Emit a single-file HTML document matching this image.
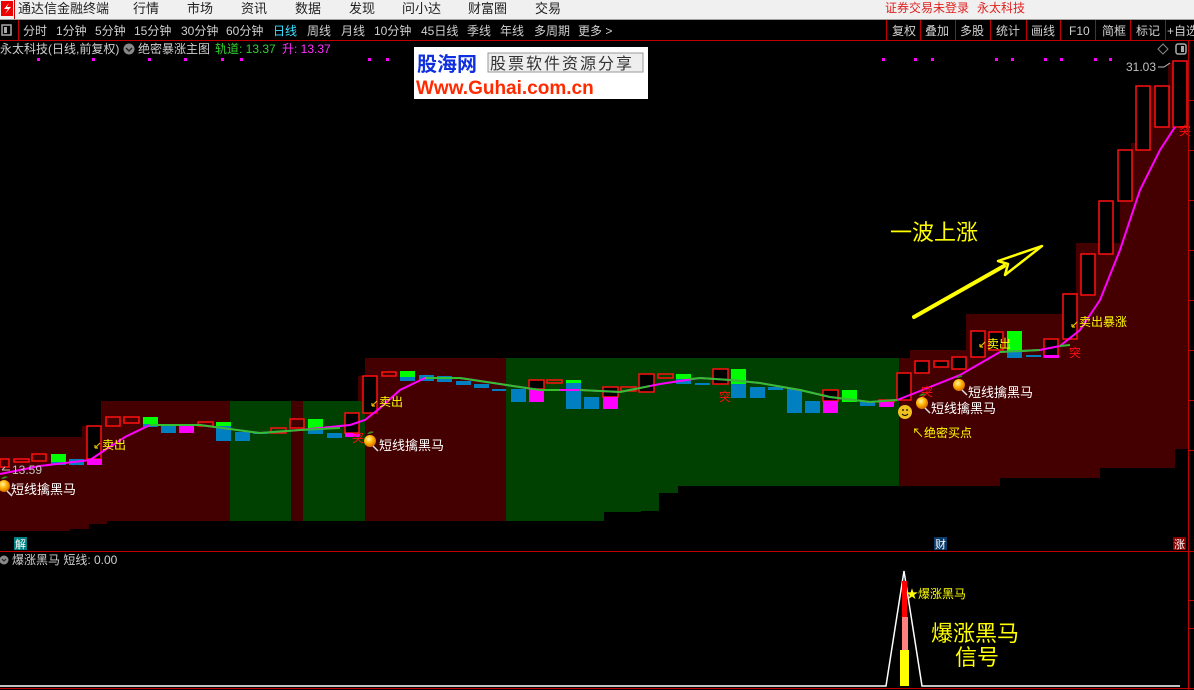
<!DOCTYPE html>
<html><head><meta charset="utf-8">
<style>
html,body{margin:0;padding:0;background:#000;width:1194px;height:690px;overflow:hidden}
svg{display:block}
text{font-family:"Liberation Sans","Noto Sans CJK SC",sans-serif}
</style></head><body>
<svg width="1194" height="690" viewBox="0 0 1194 690" xmlns="http://www.w3.org/2000/svg">
<defs>
<radialGradient id="org" cx="0.4" cy="0.35" r="0.7"><stop offset="0" stop-color="#fff6a0"/><stop offset="0.5" stop-color="#ffb000"/><stop offset="1" stop-color="#d06000"/></radialGradient>
<g id="fruit"><path d="M-3,-7 q3,-4 7,-2 q-3,2 -7,2z" fill="#3a8a20"/><circle r="6" fill="url(#org)"/><line x1="3" y1="5" x2="8" y2="10" stroke="#ddd" stroke-width="1.5"/></g>
</defs>
<!-- top menu -->
<rect x="0" y="0" width="1194" height="19" fill="#f0f0f0"/>
<rect x="0" y="19" width="1194" height="1" fill="#a0a0a0"/>
<rect x="1" y="1" width="12" height="15" fill="#e00"/>
<path d="M9,3 L4,9 L8,9 L5,14 L11,7 L7,7z" fill="#fff"/>
<rect x="14" y="0" width="1" height="19" fill="#c00"/>
<g font-size="13" fill="#222">
<text x="18" y="13">通达信金融终端</text>
<text x="133" y="13">行情</text><text x="187" y="13">市场</text><text x="241" y="13">资讯</text><text x="295" y="13">数据</text><text x="349" y="13">发现</text><text x="402" y="13">问小达</text><text x="468" y="13">财富圈</text><text x="535" y="13">交易</text>
</g>
<text x="885" y="12" font-size="12" fill="#e02020">证券交易未登录</text>
<text x="977" y="12" font-size="12" fill="#e02020">永太科技</text>
<!-- toolbar -->
<rect x="0" y="20" width="1194" height="20" fill="#000"/>
<rect x="0" y="40" width="1194" height="1" fill="#c00000"/>
<rect x="2" y="25" width="9" height="10" fill="none" stroke="#aaa" stroke-width="1.5"/><rect x="4" y="27" width="3" height="6" fill="#aaa"/>
<rect x="18" y="20" width="1" height="20" fill="#c00000"/>
<g font-size="12" fill="#d0d0d0">
<text x="23" y="35">分时</text><text x="56" y="35">1分钟</text><text x="95" y="35">5分钟</text><text x="134" y="35">15分钟</text><text x="181" y="35">30分钟</text><text x="226" y="35">60分钟</text>
<text x="273" y="35" fill="#40e0ff">日线</text><text x="307" y="35">周线</text><text x="341" y="35">月线</text><text x="374" y="35">10分钟</text><text x="421" y="35">45日线</text><text x="467" y="35">季线</text><text x="500" y="35">年线</text><text x="534" y="35">多周期</text><text x="578" y="35">更多 &gt;</text>
<text x="892" y="35">复权</text><text x="925" y="35">叠加</text><text x="960" y="35">多股</text><text x="996" y="35">统计</text><text x="1031" y="35">画线</text><text x="1069" y="35">F10</text><text x="1102" y="35">简框</text><text x="1136" y="35">标记</text><text x="1167" y="35">+自选</text>
</g>
<g fill="#c00000"><rect x="886" y="20" width="1" height="20"/><rect x="920" y="20" width="1" height="20"/><rect x="955" y="20" width="1" height="20"/><rect x="990" y="20" width="1" height="20"/><rect x="1026" y="20" width="1" height="20"/><rect x="1060" y="20" width="1" height="20"/><rect x="1095" y="20" width="1" height="20"/><rect x="1130" y="20" width="1" height="20"/><rect x="1165" y="20" width="1" height="20"/></g>

<!-- background zones -->
<g fill="#440000">
<path d="M0,437 L82,437 L82,426 L101,426 L101,401 L365,401 L365,521 L107,521 L107,524 L89,524 L89,529 L70,529 L70,531 L0,531z"/>
<path d="M358,376 L365,376 L365,358 L506,358 L506,521 L358,521z"/>
<path d="M899,358 L910,358 L910,350 L966,350 L966,314 L1063,314 L1063,293 L1076,293 L1076,243 L1120,243 L1120,201 L1131,201 L1131,143 L1139,143 L1139,86 L1168,86 L1168,63 L1188,63 L1188,449 L1175,449 L1175,468 L1100,468 L1100,478 L1000,478 L1000,486 L899,486z"/>
</g>
<g fill="#004000">
<rect x="230" y="401" width="61" height="120"/>
<rect x="303" y="401" width="62" height="120"/>
<path d="M506,358 L899,358 L899,486 L678,486 L678,493 L659,493 L659,511 L641,511 L641,512 L604,512 L604,521 L506,521z"/>
</g>
<rect x="291" y="401" width="12" height="120" fill="#440000"/>

<!-- candles -->
<g fill="none" stroke="#ff1010" stroke-width="1.5">
<rect x="0" y="459" width="9" height="8"/><rect x="14" y="459" width="15" height="3"/><rect x="32" y="454" width="14" height="7"/>
<rect x="87" y="426" width="14" height="33" fill="#000"/><rect x="106" y="417" width="14" height="9"/><rect x="124" y="417" width="15" height="6"/>
<rect x="198" y="422" width="15" height="4"/><rect x="271" y="428" width="15" height="5"/><rect x="290" y="419" width="14" height="9"/>
<rect x="345" y="413" width="14" height="20" fill="#000"/><rect x="363" y="376" width="14" height="37" fill="#000"/><rect x="382" y="372" width="14" height="4"/>
<rect x="529" y="380" width="15" height="9" fill="#000"/><rect x="547" y="380" width="15" height="3"/><rect x="603" y="387" width="15" height="10" fill="#000"/><rect x="621" y="387" width="15" height="4"/>
<rect x="639" y="374" width="15" height="18" fill="#000"/><rect x="658" y="374" width="15" height="4"/><rect x="713" y="369" width="15" height="15" fill="#000"/>
<rect x="823" y="390" width="15" height="11" fill="#000"/><rect x="879" y="400" width="15" height="2"/><rect x="897" y="373" width="14" height="27" fill="#000"/>
<rect x="915" y="361" width="14" height="12" fill="#000"/><rect x="934" y="361" width="14" height="6" fill="#000"/><rect x="952" y="357" width="14" height="12" fill="#000"/>
<rect x="971" y="331" width="14" height="26" fill="#000"/><rect x="989" y="332" width="14" height="18" fill="#000"/><rect x="1044" y="339" width="14" height="18" fill="#000"/>
<rect x="1063" y="294" width="14" height="45" fill="#000"/><rect x="1081" y="254" width="14" height="41" fill="#000"/><rect x="1099" y="201" width="14" height="53" fill="#000"/>
<rect x="1118" y="150" width="14" height="51" fill="#000"/><rect x="1136" y="86" width="14" height="64" fill="#000"/><rect x="1155" y="86" width="14" height="41" fill="#000"/><rect x="1173" y="61" width="14" height="66" fill="#000"/>
</g>
<g fill="#00ff00">
<rect x="51" y="454" width="15" height="8"/><rect x="143" y="417" width="15" height="7"/><rect x="216" y="422" width="15" height="4"/><rect x="308" y="419" width="15" height="10"/>
<rect x="400" y="371" width="15" height="6"/><rect x="566" y="380" width="15" height="3"/><rect x="676" y="374" width="15" height="5"/><rect x="731" y="369" width="15" height="15"/>
<rect x="842" y="390" width="15" height="12"/><rect x="1007" y="331" width="15" height="20"/>
</g>
<g fill="#0080c0">
<rect x="51" y="462" width="15" height="3"/><rect x="69" y="459" width="15" height="6"/><rect x="143" y="424" width="15" height="3"/><rect x="161" y="426" width="15" height="7"/>
<rect x="216" y="426" width="15" height="15"/><rect x="235" y="432" width="15" height="9"/><rect x="253" y="432" width="15" height="2"/><rect x="308" y="429" width="15" height="5"/><rect x="327" y="433" width="15" height="5"/>
<rect x="400" y="377" width="15" height="4"/><rect x="419" y="375" width="15" height="6"/><rect x="437" y="376" width="15" height="6"/><rect x="456" y="381" width="15" height="4"/><rect x="474" y="384" width="15" height="4"/><rect x="492" y="389" width="14" height="2"/>
<rect x="511" y="389" width="15" height="13"/><rect x="566" y="383" width="15" height="26"/><rect x="584" y="397" width="15" height="12"/><rect x="676" y="379" width="15" height="5"/><rect x="695" y="383" width="15" height="2"/>
<rect x="731" y="384" width="15" height="14"/><rect x="750" y="387" width="15" height="11"/><rect x="768" y="387" width="15" height="3"/><rect x="787" y="389" width="15" height="24"/><rect x="805" y="401" width="15" height="12"/><rect x="860" y="401" width="15" height="5"/>
<rect x="1007" y="351" width="15" height="7"/><rect x="1026" y="355" width="15" height="2"/>
</g>
<g fill="#ff00ff">
<rect x="87" y="459" width="15" height="6"/><rect x="179" y="426" width="15" height="7"/><rect x="345" y="433" width="15" height="4"/><rect x="529" y="389" width="15" height="13"/>
<rect x="603" y="397" width="15" height="12"/><rect x="823" y="401" width="15" height="12"/><rect x="879" y="402" width="15" height="5"/><rect x="1044" y="355" width="15" height="3"/>
</g>
<!-- MA line -->
<polyline fill="none" stroke="#ff00ff" stroke-width="2" points="0,474 40,466 90,460 105,450 125,437 150,425 200,425 260,433 300,430 350,425 365,420 380,408 400,390 425,378 460,378 500,384 540,390 580,390 620,392 660,384 700,378 730,380 760,383 800,390 830,397 870,402 897,400 915,393 960,375 1000,352 1040,350 1060,346 1080,330 1100,300 1120,250 1140,190 1160,150 1175,127"/>
<polyline fill="none" stroke="#30c030" stroke-width="2" points="150,425 200,425 260,433 300,430 340,428"/>
<polyline fill="none" stroke="#30c030" stroke-width="2" points="425,378 460,378 500,384 540,390 560,390"/>
<polyline fill="none" stroke="#30c030" stroke-width="2" points="580,390 620,392 650,386"/>
<polyline fill="none" stroke="#30c030" stroke-width="2" points="690,379 700,378 730,380 760,383 800,390 830,397 870,402 897,400"/>
<polyline fill="none" stroke="#30c030" stroke-width="2" points="1000,352 1040,350"/>
<polyline fill="none" stroke="#30c030" stroke-width="2" points="1060,346 1070,345"/>
<!-- top dots -->
<g fill="#ff00ff">
<rect x="37" y="58" width="3" height="3"/><rect x="92" y="58" width="3" height="3"/><rect x="148" y="58" width="3" height="3"/><rect x="184" y="58" width="3" height="3"/><rect x="221" y="58" width="3" height="3"/><rect x="240" y="58" width="3" height="3"/><rect x="368" y="58" width="3" height="3"/><rect x="386" y="58" width="3" height="3"/>
<rect x="882" y="58" width="3" height="3"/><rect x="914" y="58" width="3" height="3"/><rect x="931" y="58" width="3" height="3"/><rect x="995" y="58" width="3" height="3"/><rect x="1011" y="58" width="3" height="3"/><rect x="1044" y="58" width="3" height="3"/><rect x="1060" y="58" width="3" height="3"/><rect x="1094" y="58" width="3" height="3"/><rect x="1109" y="58" width="3" height="3"/>
</g>
<!-- info line -->
<text x="0" y="53" font-size="12" fill="#d0d0d0">永太科技(日线,前复权)</text>
<circle cx="129" cy="49" r="5.5" fill="#888"/><path d="M126,48 l3,3 l3,-3" stroke="#222" stroke-width="1.5" fill="none"/>
<text x="138" y="53" font-size="12" fill="#d0d0d0">绝密暴涨主图</text>
<text x="215" y="53" font-size="12" fill="#30d030">轨道: 13.37</text>
<text x="282" y="53" font-size="12" fill="#ff30ff">升: 13.37</text>
<path d="M1163,44 l5,5 l-5,5 l-5,-5z" fill="none" stroke="#888"/>
<rect x="1176" y="44" width="10" height="10" rx="2" fill="none" stroke="#aaa" stroke-width="1.5"/><rect x="1181" y="46" width="3" height="6" fill="#aaa"/>
<!-- watermark -->
<rect x="414" y="47" width="234" height="52" fill="#fff"/>
<text x="417" y="71" font-size="20" font-weight="bold" fill="#1030e0">股海网</text>
<rect x="488" y="53" width="155" height="19" fill="#eee" stroke="#999"/>
<text x="490" y="69" font-size="16" fill="#333" font-family="Noto Serif CJK SC,serif" letter-spacing="2">股票软件资源分享</text>
<text x="416" y="94" font-size="19" font-weight="bold" fill="#ff2a00">Www.Guhai.com.cn</text>
<!-- price labels -->
<text x="1126" y="71" font-size="12" fill="#c0c0c0">31.03</text><path d="M1158,67 h6 l6,-4" stroke="#c0c0c0" fill="none"/>
<text x="12" y="474" font-size="12" fill="#c0c0c0">13.59</text><path d="M2,470 h8 M2,470 l3,-3" stroke="#c0c0c0" fill="none"/>
<!-- annotations -->
<g font-size="12" fill="#ffff00">
<text x="102" y="449">卖出</text><text x="379" y="406">卖出</text><text x="987" y="348">卖出</text><text x="1079" y="326">卖出暴涨</text>
<text x="912" y="437">↖绝密买点</text>
</g>
<g stroke="#e0c000" stroke-width="1.2"><path d="M95,448 l5,-5 M95,448 h3 M95,448 v-3"/><path d="M372,406 l5,-5 M372,406 h3 M372,406 v-3"/><path d="M980,347 l5,-5 M980,347 h3 M980,347 v-3"/><path d="M1072,327 l5,-5 M1072,327 h3 M1072,327 v-3"/></g>
<g font-size="12" fill="#ff1010">
<text x="352" y="442">突</text><text x="719" y="401">突</text><text x="921" y="396">突</text><text x="1069" y="357">突</text><text x="1179" y="135">突</text>
</g>
<g font-size="13" fill="#ffffff">
<text x="11" y="494">短线擒黑马</text><text x="379" y="450">短线擒黑马</text><text x="968" y="397">短线擒黑马</text><text x="931" y="413">短线擒黑马</text>
</g>
<use href="#fruit" x="4" y="486"/><use href="#fruit" x="370" y="441"/><use href="#fruit" x="959" y="385"/><use href="#fruit" x="922" y="403"/>
<circle cx="905" cy="412" r="7" fill="#f0c020"/><circle cx="903" cy="410" r="0.9" fill="#000"/><circle cx="907" cy="410" r="0.9" fill="#000"/><path d="M902,414 q3,3 6,0" stroke="#000" fill="none"/>
<text x="890" y="240" font-size="22" fill="#ffff00">一波上涨</text>
<line x1="914" y1="317" x2="1004" y2="266" stroke="#ffff00" stroke-width="4" stroke-linecap="round"/>
<path d="M1042,246 L998,261 L1008,264 L1005,275z" fill="none" stroke="#ffff00" stroke-width="2.5" stroke-linejoin="round"/>
<!-- separator -->
<rect x="14" y="537" width="13" height="13" fill="#008080"/><text x="15" y="548" font-size="11" fill="#fff">解</text>
<rect x="934" y="537" width="13" height="13" fill="#0a3a6a"/><text x="935" y="548" font-size="11" fill="#fff">财</text>
<rect x="1173" y="537" width="13" height="13" fill="#880000"/><text x="1174" y="548" font-size="11" fill="#fff">涨</text>
<rect x="0" y="551" width="1194" height="1" fill="#c00000"/>
<rect x="1188" y="41" width="1" height="649" fill="#c00000"/>
<g fill="#c00000"><rect x="1188" y="100" width="6" height="1"/><rect x="1188" y="150" width="6" height="1"/><rect x="1188" y="200" width="6" height="1"/><rect x="1188" y="250" width="6" height="1"/><rect x="1188" y="300" width="6" height="1"/><rect x="1188" y="350" width="6" height="1"/><rect x="1188" y="400" width="6" height="1"/><rect x="1188" y="450" width="6" height="1"/><rect x="1188" y="600" width="6" height="1"/><rect x="1188" y="628" width="6" height="1"/></g>
<!-- lower panel -->
<circle cx="4" cy="560" r="4.5" fill="#888"/><path d="M2,559 l2,2 l2,-2" stroke="#222" fill="none"/>
<text x="12" y="564" font-size="12" fill="#d0d0d0">爆涨黑马  短线: 0.00</text>
<polyline fill="none" stroke="#fff" stroke-width="1.5" points="0,686 886,686 904,571 922,686 1180,686"/>
<rect x="902" y="581" width="5" height="36" fill="#ff0000"/>
<rect x="902" y="617" width="6" height="33" fill="#ff8080"/>
<rect x="900" y="650" width="9" height="36" fill="#ffff00"/>
<text x="906" y="598" font-size="12" fill="#ffff00">★爆涨黑马</text>
<text x="931" y="641" font-size="22" fill="#ffff00">爆涨黑马</text>
<text x="955" y="665" font-size="22" fill="#ffff00">信号</text>
<rect x="0" y="688" width="1194" height="1" fill="#c00000"/>
</svg>
</body></html>
